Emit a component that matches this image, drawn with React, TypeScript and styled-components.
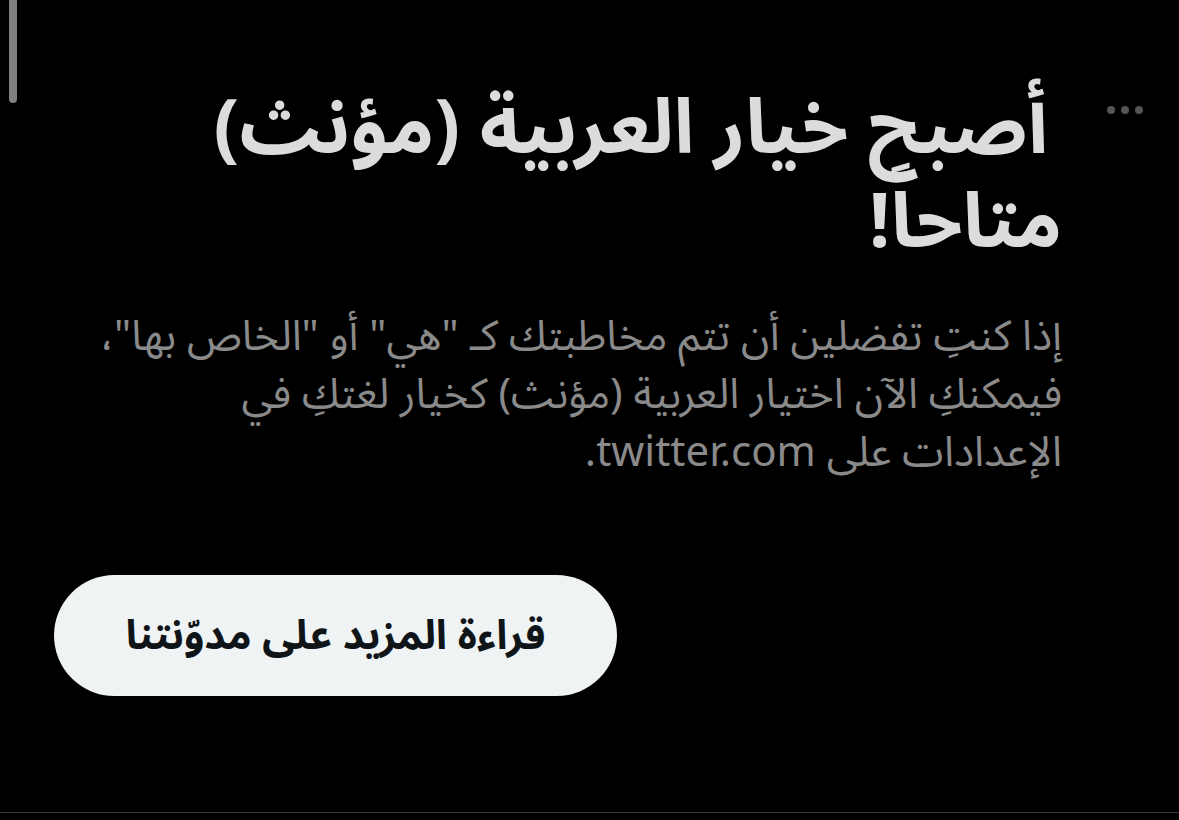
import styled, { createGlobalStyle } from 'styled-components';

const GlobalStyle = createGlobalStyle`
  html, body {
    margin: 0;
    padding: 0;
    background: #000;
  }
  body {
    font-family: "Noto Sans Arabic", "DejaVu Sans", "Noto Sans", sans-serif;
  }
`;

const App = () => {
  return (
    <Page>
      <GlobalStyle />
      <ScrollThumb />
      <MoreButton aria-label="المزيد">
        <Dot />
        <Dot />
        <Dot />
      </MoreButton>
      <Content dir="rtl">
        <Title>
          <FirstLine>أصبح خيار العربية (مؤنث)</FirstLine>
          <br />
          متاحاً!
        </Title>
        <Body>
          إذا كنتِ تفضلين أن تتم مخاطبتك كـ "هي" أو "الخاص بها"،
          <br />
          فيمكنكِ الآن اختيار العربية (مؤنث) كخيار لغتكِ في
          <br />
          الإعدادات على twitter.com.
        </Body>
        <Actions>
          <PillButton>قراءة المزيد على مدوّنتنا</PillButton>
        </Actions>
      </Content>
      <Divider />
    </Page>
  );
};

export default App;

const Page = styled.div`
  position: relative;
  width: 100%;
  height: 820px;
  display: flex;
  flex-direction: column;
  background: #000;
  overflow: hidden;
`;

const ScrollThumb = styled.div`
  position: absolute;
  left: 9px;
  top: 0;
  width: 8px;
  height: 103px;
  border-radius: 0 0 4px 4px;
  background: #808080;
`;

const MoreButton = styled.div`
  position: absolute;
  top: 106px;
  right: 36px;
  display: flex;
  gap: 6px;
`;

const Dot = styled.span`
  width: 8px;
  height: 8px;
  border-radius: 50%;
  background: #555;
`;

const Content = styled.div`
  display: flex;
  flex-direction: column;
  padding: 82px 117px 0 40px;
`;

const Title = styled.h1`
  margin: 0;
  font-size: 76px;
  font-weight: 700;
  line-height: 94px;
  color: #dcdcdc;
  text-align: right;
  white-space: nowrap;
`;

const FirstLine = styled.span`
  margin-right: 14px;
`;

const Body = styled.p`
  margin: 38px 0 0;
  font-size: 42px;
  font-weight: 400;
  line-height: 58px;
  color: #8a8a8a;
  text-align: right;
  white-space: nowrap;
`;

const Actions = styled.div`
  display: flex;
  justify-content: flex-end;
  margin-top: 93px;
  margin-left: 14px;
`;

const PillButton = styled.button`
  width: 563px;
  height: 121px;
  border: none;
  border-radius: 61px;
  background: #eff3f4;
  color: #0f1419;
  font-family: inherit;
  font-size: 41px;
  font-weight: 700;
  cursor: pointer;
`;

const Divider = styled.div`
  margin-top: auto;
  margin-bottom: 7px;
  height: 1px;
  background: #3a3a3a;
`;
